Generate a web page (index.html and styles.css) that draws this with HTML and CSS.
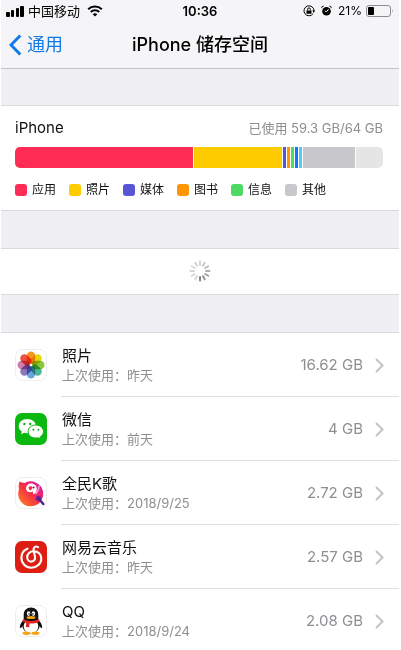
FILE: index.html
```
<!DOCTYPE html>
<html lang="zh-CN">
<head>
<meta charset="utf-8">
<meta name="viewport" content="width=device-width, initial-scale=1">
<title>iPhone 储存空间</title>
<link rel="stylesheet" href="styles.css">
</head>
<body>
<div class="screen">
  <header class="top">
    <div class="status">
      <div class="status-left">
        <svg class="signal" viewBox="0 0 18 11" aria-hidden="true"><rect x="0" y="6" width="4" height="5" rx="1"/><rect x="5" y="4" width="3" height="7" rx="1"/><rect x="10" y="2" width="3" height="9" rx="1"/><rect x="14" y="0" width="4" height="11" rx="1"/></svg>
        <span>中国移动</span>
        <svg class="wifi" viewBox="0 0 16 12" aria-hidden="true"><path d="M1.2 4.3a9.8 9.8 0 0 1 13.6 0M3.8 7a6 6 0 0 1 8.4 0" fill="none" stroke="#000" stroke-width="2"/><path d="M5.7 9.2a3.4 3.4 0 0 1 4.6 0L8 11.6z"/></svg>
      </div>
      <time class="clock">10:36</time>
      <div class="status-right">
        <svg class="lock" viewBox="0 0 12 12" aria-hidden="true"><path d="M10.2 8.5A5 5 0 1 1 11 6" fill="none" stroke="#000" stroke-width="1"/><path d="M9.3 5.6h2.7L10.8 8zM3.5 5.5h5v3.3h-5z"/><path d="M4.6 5.5V4.3a1.4 1.4 0 0 1 2.8 0v1.2" fill="none" stroke="#000" stroke-width="1"/></svg>
        <svg class="alarm" viewBox="0 0 11 12" aria-hidden="true"><circle cx="5.5" cy="6.3" r="4.3"/><path d="M.3 3.2A2.2 2.2 0 0 1 3.2.8zM10.7 3.2A2.2 2.2 0 0 0 7.8.8z"/><path d="M7.6 4.2 5.5 6.7 3.8 6" fill="none" stroke="#fff" stroke-width="1"/></svg>
        <span>21%</span>
        <svg class="battery" viewBox="0 0 28 12" aria-hidden="true"><rect x=".5" y=".5" width="24" height="11" rx="2.5" fill="none" stroke="#8d8d90"/><rect x="2" y="2" width="6" height="8" rx="1"/><path d="M26 4.2q1.6 1.8 0 3.6z" fill="#8d8d90"/></svg>
      </div>
    </div>
    <nav class="nav">
      <a class="back" href="#"><svg viewBox="0 0 13 22" aria-hidden="true"><path d="M11.3 1.5 2 11l9.3 9.500" fill="none" stroke="#1279e8" stroke-width="3"/></svg>通用</a>
      <h1>iPhone 储存空间</h1>
    </nav>
  </header>

  <main>
    <section class="panel usage">
      <div class="usage-head"><h2>iPhone</h2><span>已使用 59.3 GB/64 GB</span></div>
      <div class="bar">
        <i class="apps"></i><i class="photos"></i><i class="media"></i><i class="books"></i><i class="messages"></i><i class="mail"></i><i class="cloud"></i><i class="other"></i><i class="free"></i>
      </div>
      <ul class="legend">
        <li><i class="apps"></i>应用</li>
        <li><i class="photos"></i>照片</li>
        <li><i class="media"></i>媒体</li>
        <li><i class="books"></i>图书</li>
        <li><i class="messages"></i>信息</li>
        <li><i class="other"></i>其他</li>
      </ul>
    </section>

    <section class="panel loading">
      <svg viewBox="-11 -11 22 22" role="img" aria-label="正在载入" fill="none" stroke-width="2" stroke-linecap="round">
        <path d="M0-6V-9.5" stroke="#d0d0d2"/><path d="M0-6V-9.5" stroke="#c8c8ca" transform="rotate(30)"/><path d="M0-6V-9.5" stroke="#bdbdc0" transform="rotate(60)"/><path d="M0-6V-9.5" stroke="#afafb2" transform="rotate(90)"/><path d="M0-6V-9.5" stroke="#a0a0a3" transform="rotate(120)"/><path d="M0-6V-9.5" stroke="#929295" transform="rotate(150)"/><path d="M0-6V-9.5" stroke="#858588" transform="rotate(180)"/><path d="M0-6V-9.5" stroke="#d6d6d8" transform="rotate(210)"/><path d="M0-6V-9.5" stroke="#d6d6d8" transform="rotate(240)"/><path d="M0-6V-9.5" stroke="#d6d6d8" transform="rotate(270)"/><path d="M0-6V-9.5" stroke="#d6d6d8" transform="rotate(300)"/><path d="M0-6V-9.5" stroke="#d3d3d5" transform="rotate(330)"/>
      </svg>
    </section>

    <ul class="panel apps-list">
      <li><a class="row" href="#">
        <svg class="icon" viewBox="0 0 32 32" aria-hidden="true">
          <rect x=".5" y=".5" width="31" height="31" rx="7" fill="#fff" stroke="#ededed"/>
          <g class="petals">
            <rect x="11.800" y="2.500" width="8.400" height="12.500" rx="4.200" fill="#f7941d"/>
            <rect x="11.800" y="2.500" width="8.400" height="12.500" rx="4.200" fill="#e8d60c" transform="rotate(45 16 16)"/>
            <rect x="11.800" y="2.500" width="8.400" height="12.500" rx="4.200" fill="#8ac640" transform="rotate(90 16 16)"/>
            <rect x="11.800" y="2.500" width="8.400" height="12.500" rx="4.200" fill="#4fb695" transform="rotate(135 16 16)"/>
            <rect x="11.800" y="2.500" width="8.400" height="12.500" rx="4.200" fill="#6ba6da" transform="rotate(180 16 16)"/>
            <rect x="11.800" y="2.500" width="8.400" height="12.500" rx="4.200" fill="#8a78bd" transform="rotate(225 16 16)"/>
            <rect x="11.800" y="2.500" width="8.400" height="12.500" rx="4.200" fill="#cf7dac" transform="rotate(270 16 16)"/>
            <rect x="11.800" y="2.500" width="8.400" height="12.500" rx="4.200" fill="#ee5140" transform="rotate(315 16 16)"/>
          </g>
          <circle cx="16" cy="16" r="1.300" fill="#fff"/>
        </svg>
        <span class="label"><b>照片</b><small>上次使用：昨天</small></span>
        <span class="size">16.62 GB</span>
        <svg class="chevron" viewBox="0 0 9 15" aria-hidden="true"><path d="M1 1l6.500 6.500L1 14"/></svg>
      </a></li>
      <li><a class="row" href="#">
        <svg class="icon" viewBox="0 0 32 32" aria-hidden="true">
          <rect width="32" height="32" rx="7" fill="#0bb80f"/>
          <path d="M12.300 6C7.400 6 3.700 9.100 3.700 13.100c0 2.300 1.200 4.200 3.100 5.500L6 21.200l3-1.500c1 .3 2.100.5 3.300.5 4.800 0 8.600-3.100 8.600-7.100S17.100 6 12.300 6z" fill="#fff"/>
          <path d="M20.900 12c-4.400 0-7.800 2.900-7.800 6.600s3.400 6.500 7.800 6.500c1 0 1.900-.1 2.700-.4l2.500 1.300-.7-2.300c1.900-1.200 3.100-3 3.100-5.100 0-3.700-3.400-6.600-7.600-6.600z" fill="#fff" stroke="#0bb80f"/>
          <g fill="#0bb80f"><circle cx="9.400" cy="11" r="1.200"/><circle cx="15.200" cy="11" r="1.200"/><circle cx="18.400" cy="16.700" r="1"/><circle cx="23.400" cy="16.700" r="1"/></g>
        </svg>
        <span class="label"><b>微信</b><small>上次使用：前天</small></span>
        <span class="size">4 GB</span>
        <svg class="chevron" viewBox="0 0 9 15" aria-hidden="true"><path d="M1 1l6.500 6.500L1 14"/></svg>
      </a></li>
      <li><a class="row" href="#">
        <svg class="icon" viewBox="0 0 32 32" aria-hidden="true">
          <defs><linearGradient id="bird" x1="0" y1="1" x2="1" y2="0"><stop offset="0" stop-color="#ff8a21"/><stop offset=".5" stop-color="#f72d45"/><stop offset="1" stop-color="#d316c8"/></linearGradient></defs>
          <rect x=".5" y=".5" width="31" height="31" rx="7" fill="#fff" stroke="#ededed"/>
          <path d="M4.500 4.500c2 1 3.500 1.300 5 1.500A12.500 12.500 0 1 1 4 12.500c-.6-3-.3-5.500.5-8z" fill="url(#bird)"/>
          <path d="M11 11.500c0-3 2.400-5 5.100-5 3.400 0 5.700 2.300 5.700 5.300 0 3.200-1.700 5.200-3.900 5.700.5-1 .3-2.100-.3-2.900-3.200 1.400-6.600 0-6.600-3.100z" fill="#fff"/>
          <path d="M13.500 10.500c.8-1.800 3.400-1.700 4.200.1-.5 1.300-1.100 1.600-1.700 2.800-1.600-.2-2.600-1.300-2.500-2.900z" fill="#ef304e"/><circle cx="18.600" cy="10.600" r="1" fill="#821c50"/>
          <path d="M20.500 17q3.500-3.500 3.500-8.500" fill="none" stroke="#ffa1d6" stroke-width="1.500"/>
          <circle cx="23.500" cy="21.500" r="2.700" fill="#74219a"/><path d="M24 22l4.300 5" stroke="#55208c" stroke-width="2.500" stroke-linecap="round"/>
        </svg>
        <span class="label"><b>全民K歌</b><small>上次使用：2018/9/25</small></span>
        <span class="size">2.72 GB</span>
        <svg class="chevron" viewBox="0 0 9 15" aria-hidden="true"><path d="M1 1l6.500 6.500L1 14"/></svg>
      </a></li>
      <li><a class="row" href="#">
        <svg class="icon" viewBox="0 0 32 32" aria-hidden="true">
          <rect width="32" height="32" rx="7" fill="#dc1f12"/>
          <path d="M12.500 7.700C8.700 9 6.400 12.500 6.400 16.800c0 5.500 4.300 9.900 9.900 9.900s10-4 10-9.300c0-4.200-3.300-7.200-7.500-7.200-4 0-6.600 2.700-6.600 6 0 2.500 1.700 4.400 4.100 4.400 2.600 0 4.200-2.200 3.700-4.700L18.600 9c-.5-2.500 1.800-4.400 4.500-2.900" fill="none" stroke="#fff" stroke-width="2.100" stroke-linecap="round" stroke-linejoin="round"/>
        </svg>
        <span class="label"><b>网易云音乐</b><small>上次使用：昨天</small></span>
        <span class="size">2.57 GB</span>
        <svg class="chevron" viewBox="0 0 9 15" aria-hidden="true"><path d="M1 1l6.500 6.500L1 14"/></svg>
      </a></li>
      <li><a class="row" href="#">
        <svg class="icon" viewBox="0 0 32 32" aria-hidden="true">
          <rect x=".5" y=".5" width="31" height="31" rx="7" fill="#fff" stroke="#ededed"/>
          <path d="M8.500 15C6 17.500 4.500 20.400 4.900 23c.9.400 2.200-.8 3.200-2.200M23.500 15c2.500 2.500 4 5.400 3.600 8-.9.400-2.200-.8-3.200-2.200" fill="#111"/>
          <ellipse cx="16" cy="20" rx="8.800" ry="8.500" fill="#111"/>
          <ellipse cx="16" cy="21.500" rx="7.300" ry="7" fill="#fff"/>
          <ellipse cx="11.500" cy="28.300" rx="4" ry="1.700" fill="#f6a313"/><ellipse cx="20.500" cy="28.300" rx="4" ry="1.700" fill="#f6a313"/>
          <path d="M8.700 14.500V10C8.700 5.400 11.800 2.600 16 2.600s7.300 2.800 7.300 7.400v4.500c-4 2.500-10.600 2.500-14.600 0z" fill="#111"/>
          <ellipse cx="13.600" cy="8.600" rx="1.700" ry="2.400" fill="#fff"/><ellipse cx="18.400" cy="8.600" rx="1.700" ry="2.400" fill="#fff"/><circle cx="14.100" cy="9" r=".8"/><circle cx="17.900" cy="9" r=".8"/>
          <ellipse cx="16" cy="12.500" rx="4.500" ry="1.500" fill="#f6a313"/>
          <path d="M8 14c4.500 2.600 11.500 2.600 16 0l.6 2.600c-3 1.800-7 2.200-10.100 1.900l-.3 3.700-3.300-.2.300-4.200c-1.300-.3-2.500-.8-3.700-1.400z" fill="#e42424"/>
        </svg>
        <span class="label"><b>QQ</b><small>上次使用：2018/9/24</small></span>
        <span class="size">2.08 GB</span>
        <svg class="chevron" viewBox="0 0 9 15" aria-hidden="true"><path d="M1 1l6.500 6.500L1 14"/></svg>
      </a></li>
    </ul>
  </main>
</div>
</body>
</html>
```

FILE: styles.css
```
* { box-sizing: border-box; }

body {
  margin: 0;
  background: #fff;
  color: #111;
  font-family: Inter, "Noto Sans CJK SC", sans-serif;
}

h1, h2, ul { margin: 0; padding: 0; }
ul { list-style: none; }
a { color: inherit; text-decoration: none; }
svg { display: block; flex: none; }

.screen {
  margin: 0 2px 0 1px;
  background: #efeff4;
}

/* Status bar and navigation */
.top {
  background: #f5f5f8;
  border-bottom: 1px solid #c4c4c9;
}

.status {
  display: grid;
  grid-template-columns: 1fr auto 1fr;
  align-items: center;
  height: 22px;
  padding: 0 5px;
  font-size: 13px;
  line-height: 22px;
  color: #000;
}

.status-left, .status-right {
  display: flex;
  align-items: center;
  gap: 4px;
}

.status-right { justify-content: flex-end; gap: 6px; font-size: 12px; }
.clock { font-size: 13px; font-weight: 600; }
.signal { width: 18px; height: 11px; }
.wifi { width: 16px; height: 12px; margin-left: 3px; }
.lock { width: 12px; height: 12px; }
.alarm { width: 11px; height: 12px; }
.battery { width: 28px; height: 12px; margin-left: -2px; }

.nav {
  display: grid;
  grid-template-columns: 1fr auto 1fr;
  align-items: center;
  height: 46px;
  padding: 0 8px;
}

.back {
  display: flex;
  align-items: center;
  gap: 5px;
  color: #1279e8;
  font-size: 18px;
  line-height: 26px;
}

.back svg { width: 13px; height: 22px; }

h1 {
  color: #000;
  font-size: 18px;
  line-height: 26px;
  font-weight: 500;
}

/* White grouped sections */
.panel {
  background: #fff;
  border-top: 1px solid #d9d9de;
  border-bottom: 1px solid #d9d9de;
}

main {
  display: flex;
  flex-direction: column;
  gap: 37px;
  padding-top: 36px;
}

.usage { padding: 12px 16px 12px 14px; }

.usage-head {
  display: flex;
  justify-content: space-between;
  align-items: center;
  line-height: 20px;
  margin-bottom: 9px;
}

h2 {
  font-size: 15px;
  font-weight: 400;
}

.usage-head span { color: #8e8e93; font-size: 13px; }

.bar {
  display: flex;
  gap: 1px;
  height: 21px;
  border-radius: 5px;
  overflow: hidden;
}

.bar i { flex: 3 1 0; }
.bar .apps { flex-grow: 177; }
.bar .photos { flex-grow: 88; }
.bar .other { flex-grow: 52; }
.bar .free { flex-grow: 27; }

.apps { background: #ff2d55; }
.photos { background: #fc0; }
.media { background: #5856d6; }
.books { background: #ff9500; }
.messages { background: #4cd964; }
.mail { background: #077aff; }
.cloud { background: #5ac8fa; }
.other { background: #c7c7cc; }
.free { background: #e5e5e5; }

.legend {
  display: flex;
  gap: 13px;
  margin-top: 14px;
}

.legend li {
  display: flex;
  align-items: center;
  gap: 5px;
  font-size: 12px;
  line-height: 16px;
}

.legend i {
  width: 12px;
  height: 12px;
  border-radius: 3px;
}

.loading {
  display: flex;
  justify-content: center;
  padding: 11px 12px 12px;
}

.loading svg { width: 22px; height: 22px; }

/* Application list */
.row {
  display: flex;
  align-items: center;
  height: 64px;
  padding: 0 15px 0 14px;
  background: linear-gradient(#dedee1, #dedee1) 60px 100% / 100% 1px no-repeat;
}

.icon { width: 32px; height: 32px; margin-right: 15px; }
.petals rect { mix-blend-mode: multiply; }

.label { flex: 1; }
.label b, .label small { display: block; }

.label b {
  font-size: 15px;
  font-weight: 400;
  line-height: 20px;
}

.label small {
  color: #8e8e93;
  font-size: 13px;
  line-height: 18px;
}

.size {
  color: #8e8e93;
  font-size: 15px;
  line-height: 20px;
  margin-right: 12px;
}

.chevron {
  width: 9px;
  height: 15px;
  fill: none;
  stroke: #c2c2c7;
  stroke-width: 2;
}
```
